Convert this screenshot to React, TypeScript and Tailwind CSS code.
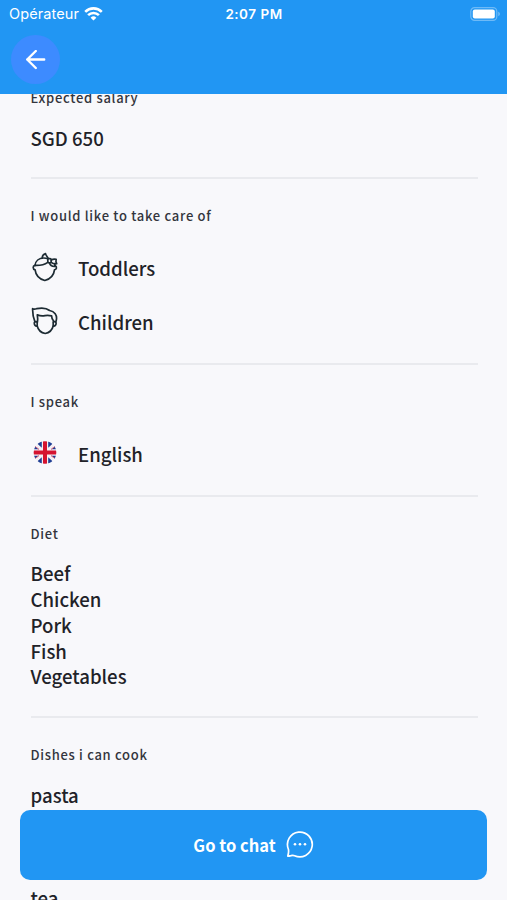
import type { ReactNode } from "react";

const diet = ["Beef", "Chicken", "Pork", "Fish", "Vegetables"];

const WifiIcon = () => (
  <svg width="19" height="14" viewBox="0 0 19 14" fill="none" stroke="white" strokeWidth="2.6">
    <path d="M1.2 4.8a11.8 11.8 0 0 1 16.6 0" />
    <path d="M4.1 8.2a7.6 7.6 0 0 1 10.8 0" />
    <path d="M9.5 13.6 6.6 10.7a4.1 4.1 0 0 1 5.8 0z" fill="white" stroke="none" />
  </svg>
);

const BatteryIcon = () => (
  <svg width="31" height="14" viewBox="0 0 31 14" fill="none">
    <rect x="0.8" y="0.6" width="26" height="12.8" rx="3.8" stroke="white" strokeOpacity="0.35" strokeWidth="1.2" />
    <rect x="2.8" y="2.5" width="22" height="9" rx="2" fill="white" />
    <path d="M28.3 4.8c2 .7 2 3.7 0 4.4z" fill="white" fillOpacity="0.4" />
  </svg>
);

const BackIcon = () => (
  <svg width="20" height="20" viewBox="0 0 20 20" fill="none" stroke="white" strokeWidth="2.4" strokeLinecap="round" strokeLinejoin="round">
    <path d="M18.2 9.5H1.2M9.8 1 1.2 9.5 9.8 18" />
  </svg>
);

const ToddlerIcon = () => (
  <svg width="28" height="30" viewBox="0 0 28 30" fill="none" stroke="#1d2b33" strokeWidth="1.7" strokeLinecap="round" strokeLinejoin="round">
    <path d="M4 13.6C4.400 9 8 6 12.800 6c1.500 0 2.700.2 3.900.6" />
    <path d="M4 13.200c-2.400.6-2.500 4 .1 4.600.6 5.200 4.500 9.200 9.700 10.700 5.200-1.500 9.100-5.500 9.700-10.700 2.300-.6 2.500-2.800.9-4" />
    <path d="M4.200 13.400c5 .2 9.400-.8 12.600-3" />
    <path d="M11.200 5.800c0-1.900 1.700-3.700 3.300-4.200.4 1.800 1.700 2.900 2.500 4.400" />
    <rect x="16.800" y="6.600" width="3.400" height="4.200" rx="1.200" />
    <path d="M20.200 8.100c1.300-.9 3.200-1.300 5-.8-.5 1.600-.3 3 .5 4.400-1.800.3-3.800 0-5.500-1.300M18.500 11c.6 2.200 2.500 3.400 5 3.500.4-1 .4-1.900.1-2.800" />
  </svg>
);

const ChildIcon = () => (
  <svg width="28" height="28" viewBox="0 0 28 28" fill="none" stroke="#1d2b33" strokeWidth="1.700" strokeLinecap="round" strokeLinejoin="round">
    <path d="M3.900 14.600C2.200 10.400 1.500 6 1.600 1.700c1.400.7 2.600.5 4 0 4.600-.9 10-.6 13 1.800 5 .7 7.600 4.600 6.800 9.200-.1 1-.3 1.600-.7 2.200" />
    <path d="M6.400 15c.4-2.400.3-5-.1-7.200 2.600 1.200 5.200 1.400 7.700.8 2.200-.4 4.600-.2 6.600.2 0 2 .7 3.800 2 5.200" />
    <path d="M6 14.800c-2.200-.5-2.900.4-2.700 1.900.2 1.600 1.200 2.500 2.900 2.300 1 4 4.200 6.900 8 7.500 3.800-.6 7-3.500 8-7.500 1.700.2 2.700-.7 2.900-2.300.2-1.500-.5-2.300-2.600-1.900" />
    <path d="M6.200 15v3.900M22.200 15v3.900" />
  </svg>
);

const UkFlag = () => (
  <svg width="24" height="24" viewBox="0 0 24 24">
    <clipPath id="uk">
      <circle cx="12" cy="11.500" r="11.300" />
    </clipPath>
    <g clipPath="url(#uk)" >
      <path fill="#f4eff4" d="M0 0h24v24H0z" />
      <g transform="translate(0 -0.5)">
        <path fill="#1f3f94" d="M8.800 0v7.200L2 1zM15.200 0v7.200L22 1zM8.800 24v-7.200L2 23zM15.200 24v-7.200L22 23zM0 4 6 8.800H0zM24 4l-6 4.800h6zM0 20l6-4.800H0zM24 20l-6-4.800h6z" />
        <path stroke="#e36b7c" strokeWidth="1" d="m1 5 5 4M23 19l-5-4M1 19l5-4M23 5l-5 4" />
        <path fill="#d5132f" d="M10 0h4v10h10v4H14v10h-4V14H0v-4h10z" />
      </g>
    </g>
  </svg>
);

const ChatIcon = () => (
  <svg width="28" height="28" viewBox="0 0 28 28" fill="none" stroke="white" strokeWidth="1.700" strokeLinejoin="round">
    <path d="M2.400 18.200A12.400 12.400 0 1 1 8.600 24.700c-1.300-.6-2.400-.5-3.600-.1-1.100.3-2 .5-3.200.5.700-2.200 1-4.700.6-6.900Z" />
    <g fill="white" stroke="none">
      <circle cx="9" cy="13.300" r="1.300" />
      <circle cx="14" cy="13.300" r="1.300" />
      <circle cx="19" cy="13.300" r="1.300" />
    </g>
  </svg>
);

const Section = ({ title, children }: { title: string; children: ReactNode }) => (
  <section className="border-b-2 border-[#e9eaee] pt-[27px]">
    <h2 className="text-[13px] leading-5 font-medium tracking-[0.7px] text-[#33353d]">{title}</h2>
    {children}
  </section>
);

const IconRow = ({ icon, label }: { icon: ReactNode; label: string }) => (
  <li className="flex h-[53.5px] items-center">
    <span className="flex w-[29px] justify-center pb-[2px]">{icon}</span>
    <span className="ml-[18.5px]">{label}</span>
  </li>
);

export default function App() {
  return (
    <div className="relative flex h-[900px] w-full flex-col overflow-hidden bg-[#f8f8fb] font-['Noto_Sans_CJK_SC','Noto_Sans',sans-serif] text-[#212228]">
      <header className="h-[94px] shrink-0 bg-[#2196f3] text-white">
        <div className="grid h-7 grid-cols-3 items-center pr-[6px] pl-[9px] font-['Inter',sans-serif] text-[13.5px]">
          <div className="flex items-center gap-[5px]">
            <span className="text-[14.5px] tracking-[0.1px]">Opérateur</span>
            <WifiIcon />
          </div>
          <span className="-ml-[2px] text-center font-semibold tracking-[0.5px]">2:07 PM</span>
          <div className="flex justify-end">
            <BatteryIcon />
          </div>
        </div>
        <button className="mt-[7px] ml-[11px] flex size-[49px] items-center justify-center rounded-full bg-[#3d8bff]">
          <BackIcon />
        </button>
      </header>

      <main className="flex-1 overflow-hidden pr-[29px] pl-[30.5px] text-[18.6px] leading-[25.7px] font-medium">
        <div className="-mt-[33px]">
          <Section title="Expected salary">
            <p className="pt-[17px] pb-[26.3px]">SGD 650</p>
          </Section>
          <Section title="I would like to take care of">
            <ul className="pt-[15.5px] pb-[14.2px]">
              <IconRow icon={<ToddlerIcon />} label="Toddlers" />
              <IconRow icon={<ChildIcon />} label="Children" />
            </ul>
          </Section>
          <Section title="I speak">
            <ul className="pt-[15.5px] pb-[14.3px]">
              <IconRow icon={<UkFlag />} label="English" />
            </ul>
          </Section>
          <Section title="Diet">
            <ul className="pt-[16.5px] pb-[26.5px]">
              {diet.map((item) => (
                <li key={item}>{item}</li>
              ))}
            </ul>
          </Section>
          <Section title="Dishes i can cook">
            <ul className="flex flex-col gap-[77px] pt-[17.5px]">
              <li>pasta</li>
              <li>tea</li>
            </ul>
          </Section>
        </div>
      </main>

      {/* Floating action over the scrolled profile */}
      <button className="absolute inset-x-5 bottom-5 flex h-[70px] items-center justify-center gap-[10px] rounded-[10px] bg-[#2196f3] text-[16.5px] font-bold text-white">
        <span>Go to chat</span>
        <ChatIcon />
      </button>
    </div>
  );
}
